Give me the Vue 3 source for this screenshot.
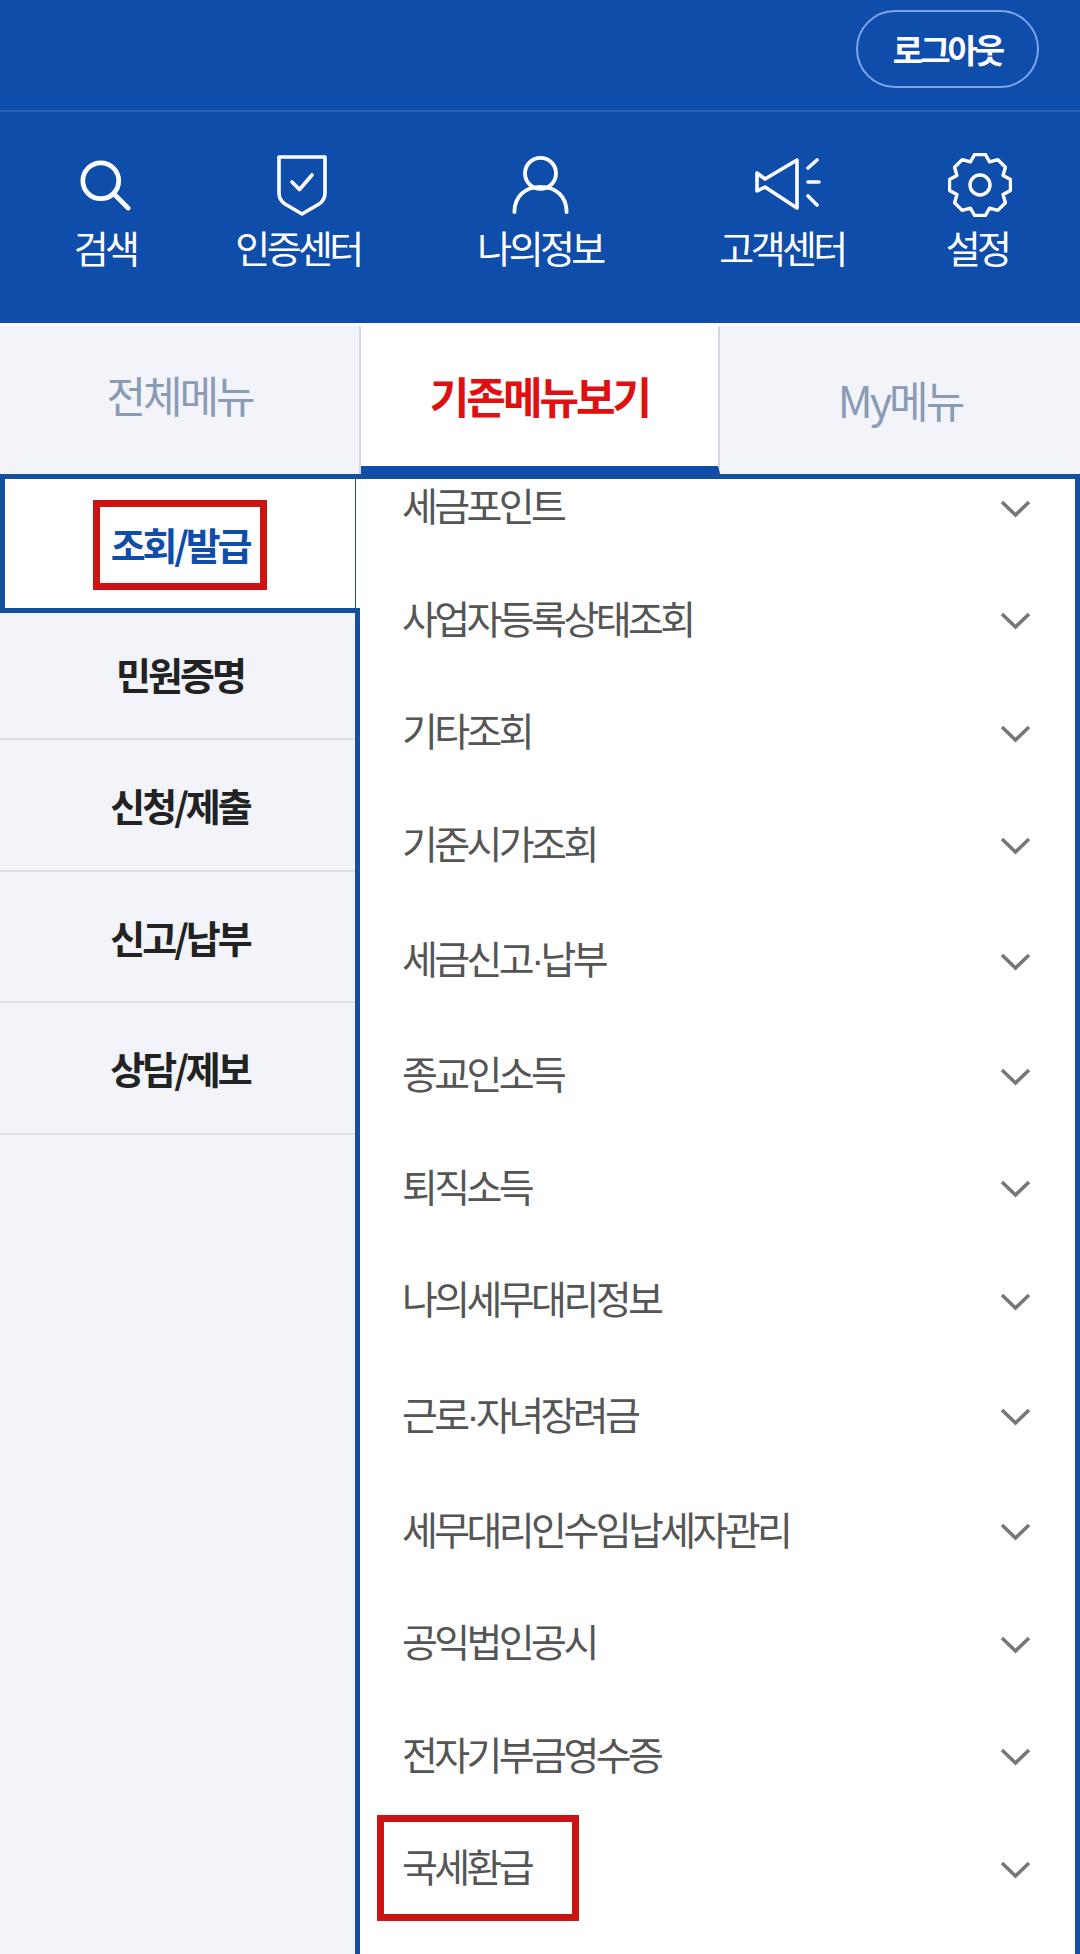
<script setup>
import { computed } from 'vue'

const subMenus = [
  { name: '세금포인트' },
  { name: '사업자등록상태조회' },
  { name: '기타조회' },
  { name: '기준시가조회' },
  { name: '세금신고', rest: '납부' },
  { name: '종교인소득' },
  { name: '퇴직소득' },
  { name: '나의세무대리정보' },
  { name: '근로', rest: '자녀장려금' },
  { name: '세무대리인수임납세자관리' },
  { name: '공익법인공시' },
  { name: '전자기부금영수증' },
  { name: '국세환급', marked: true }
]

const sideMenus = ['민원증명', '신청/제출', '신고/납부', '상담/제보']

// 톱니 8개짜리 설정 아이콘
const gearPath = computed(() => {
  const pts = []
  for (let i = 0; i < 8; i++) {
    const a = (i * 45 - 90) * Math.PI / 180
    const d = 10 * Math.PI / 180
    const g = 12.5 * Math.PI / 180
    pts.push([a - g - d, 25], [a - d, 31], [a + d, 31], [a + g + d, 25])
  }
  return 'M' + pts.map(([a, r]) => `${(32 + r * Math.cos(a)).toFixed(1)} ${(32 + r * Math.sin(a)).toFixed(1)}`).join('L') + 'Z'
})
</script>

<template>
  <div class="page">
    <header class="header">
      <div class="top-bar">
        <button class="logout" type="button">로그아웃</button>
      </div>
      <nav class="quick-nav">
        <a class="quick-item">
          <span class="quick-icon">
            <svg width="51" height="51" viewBox="0 0 54 54" fill="none" stroke="#fff" stroke-width="5" stroke-linecap="round">
              <circle cx="22" cy="22" r="19" />
              <path d="M36 36l15 15" />
            </svg>
          </span>
          <span>검색</span>
        </a>
        <a class="quick-item">
          <span class="quick-icon shift-s">
            <svg width="50" height="62" viewBox="0 0 50 62" fill="none" stroke="#fff" stroke-width="3.6" stroke-linejoin="round" stroke-linecap="round">
              <path d="M2 3h46v36q0 7-6 11L25 60 8 50q-6-4-6-11z" />
              <path d="M15 28l7.500 7.500L35 21" />
            </svg>
          </span>
          <span>인증센터</span>
        </a>
        <a class="quick-item">
          <span class="quick-icon">
            <svg width="57" height="58" viewBox="0 0 58 60" fill="none" stroke="#fff" stroke-width="4" stroke-linecap="round">
              <circle cx="29" cy="18" r="16" />
              <path d="M2 58c0-16 11-26 27-26s27 10 27 26" />
            </svg>
          </span>
          <span>나의정보</span>
        </a>
        <a class="quick-item">
          <span class="quick-icon shift-l">
            <svg width="68" height="54" viewBox="0 0 68 54" fill="none" stroke="#fff" stroke-width="3.600" stroke-linejoin="round" stroke-linecap="round">
              <path d="M44 2L12 21 4 15v18l8-4 32 21z" />
              <path d="M64 2l-9 8M55 24h11M55 38l9 9" />
            </svg>
          </span>
          <span>고객센터</span>
        </a>
        <a class="quick-item last">
          <span class="quick-icon shift-g">
            <svg width="64" height="64" viewBox="0 0 64 64" fill="none" stroke="#fff" stroke-width="3.400" stroke-linejoin="round">
              <path :d="gearPath" />
              <circle cx="32" cy="32" r="10" />
            </svg>
          </span>
          <span>설정</span>
        </a>
      </nav>
    </header>

    <div class="tabs">
      <div class="tab">전체메뉴</div>
      <div class="tab active">기존메뉴보기</div>
      <div class="tab my">My메뉴</div>
    </div>

    <div class="frame">
      <aside class="side">
        <div class="side-active">
          <div class="side-active-inner">
            <span class="side-mark">조회/발급</span>
          </div>
        </div>
        <ul class="side-list">
          <li v-for="menu in sideMenus" :key="menu" class="side-item">{{ menu }}</li>
        </ul>
      </aside>
      <div class="content">
        <ul class="sub-list">
          <li
            v-for="item in subMenus"
            :key="item.name"
            class="sub-item"
            :class="{ tall: item.rest }"
          >
            <span class="sub-name" :class="{ marked: item.marked }">{{ item.name }}<span v-if="item.rest" class="dot">·</span>{{ item.rest }}</span>
            <svg class="chevron" width="31" height="18" viewBox="0 0 31 18" fill="none" stroke="#777" stroke-width="3.600">
              <path d="M2 2l13.500 13L29 2" />
            </svg>
          </li>
        </ul>
      </div>
    </div>
  </div>
</template>

<style>
html, body {
  margin: 0;
  background: #fff;
}
</style>

<style scoped>
.page {
  width: 1080px;
  height: 1954px;
  display: flex;
  flex-direction: column;
  overflow: hidden;
  font-family: "Noto Sans CJK KR", "Noto Sans", sans-serif;
  background: #fff;
}

.header {
  height: 323px;
  background: #0f4dab;
  color: #fff;
}

.top-bar {
  height: 112px;
  box-sizing: border-box;
  padding: 10px 41px 0 0;
  display: flex;
  justify-content: flex-end;
  align-items: flex-start;
  border-bottom: 2px solid #2a60b5;
}

.logout {
  width: 183px;
  height: 78px;
  border: 2px solid #7ea3e6;
  border-radius: 39px;
  background: transparent;
  color: #fff;
  font-family: inherit;
  font-size: 33px;
  font-weight: 700;
  letter-spacing: -3px;
  padding: 0;
}

.quick-nav {
  display: grid;
  grid-template-columns: 210px 176px 308px 176px 1fr;
  padding-top: 37px;
}

.quick-item {
  display: flex;
  flex-direction: column;
  align-items: center;
  font-size: 38px;
  line-height: 48px;
  letter-spacing: -3.6px;
  white-space: nowrap;
}

.quick-item.last {
  padding-left: 4px;
}

.quick-icon {
  height: 72px;
  display: flex;
  align-items: center;
  justify-content: center;
  margin-bottom: 2px;
}

.shift-s {
  margin-left: 7px;
}

.shift-l {
  margin-left: 10px;
}

.shift-g {
  margin-left: 5px;
}

.tabs {
  margin-top: 3px;
  height: 148px;
  display: grid;
  grid-template-columns: 361px 359px 360px;
}

.tab {
  box-sizing: border-box;
  display: flex;
  align-items: center;
  justify-content: center;
  padding-bottom: 12px;
  background: #f2f4fa;
  color: #8a9bb5;
  font-size: 43px;
  letter-spacing: -3px;
  border-right: 2px solid #d3d8e2;
}

.tab.active {
  background: #fff;
  color: #e01010;
  font-weight: 700;
  border-bottom: 8px solid #0f4dab;
  padding-bottom: 2px;
}

.tab.my {
  border-right: 0;
  padding-bottom: 2px;
}

.frame {
  flex: 1;
  min-height: 0;
  display: flex;
  box-sizing: border-box;
  border-top: 5px solid #144fa0;
  border-right: 5px solid #144fa0;
  background: #fff;
}

.side {
  width: 360px;
  flex: none;
  display: flex;
  flex-direction: column;
}

.side-active {
  border-left: 5px solid #144fa0;
  border-bottom: 5px solid #144fa0;
}

.side-active-inner {
  box-sizing: border-box;
  width: 351px;
  height: 129px;
  padding-top: 3px;
  border-right: 1px solid #144fa0;
  display: flex;
  align-items: center;
  justify-content: center;
}

.side-mark {
  box-sizing: border-box;
  width: 174px;
  height: 90px;
  padding-bottom: 3px;
  border: 7px solid #cc1414;
  display: flex;
  align-items: center;
  justify-content: center;
  color: #0f4dab;
  font-size: 38px;
  font-weight: 700;
  letter-spacing: -3.2px;
  white-space: nowrap;
}

.side-list {
  flex: 1;
  margin: 0;
  padding: 0;
  list-style: none;
  background: #f2f4fa;
  border-right: 5px solid #144fa0;
}

.side-item {
  box-sizing: border-box;
  height: 131.500px;
  display: flex;
  align-items: center;
  justify-content: center;
  padding-left: 5px;
  border-bottom: 2px solid #dcdee4;
  color: #222;
  font-size: 38px;
  font-weight: 700;
  letter-spacing: -3px;
}

.side-item:first-child {
  height: 127px;
  padding-bottom: 4px;
}

.content {
  flex: 1;
  min-width: 0;
  overflow: hidden;
}

.sub-list {
  margin: -30px 0 0;
  padding: 0;
  list-style: none;
}

.sub-item {
  height: 112.500px;
  display: flex;
  align-items: center;
  justify-content: space-between;
  padding: 0 44px 0 42px;
}

.sub-item.tall {
  height: 118px;
}

.chevron {
  margin-top: 7px;
}

.sub-name {
  position: relative;
  margin-bottom: 2px;
  color: #555;
  font-size: 39px;
  letter-spacing: -3.6px;
  white-space: nowrap;
}

.dot {
  font-family: "Liberation Sans", sans-serif;
}

/* 안내용 빨간 표시 */
.sub-name.marked::after {
  content: "";
  position: absolute;
  left: -25px;
  right: -48px;
  top: calc(50% - 50px);
  height: 106px;
  box-sizing: border-box;
  border: 7px solid #cc1414;
}
</style>
